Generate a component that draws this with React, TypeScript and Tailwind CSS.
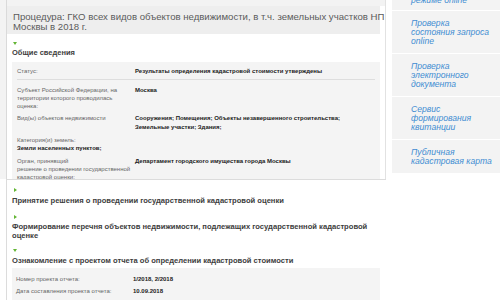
import React from 'react';

function TriDown() {
  return (
    <div className="ml-[1px] w-0 h-0 border-l-[2.5px] border-r-[2.5px] border-t-[3px] border-l-transparent border-r-transparent border-t-[#63b534]" />
  );
}

function TriRight() {
  return (
    <div className="ml-[2px] w-0 h-0 border-t-[2.5px] border-b-[2.5px] border-l-[3px] border-t-transparent border-b-transparent border-l-[#63b534]" />
  );
}

const sideLinks = [
  ['Проверка', 'состояния запроса', 'online'],
  ['Проверка', 'электронного', 'документа'],
  ['Сервис', 'формирования', 'квитанции'],
  ['Публичная', 'кадастровая карта'],
];

export default function App() {
  return (
    <div className="w-[500px] h-[300px] overflow-hidden bg-white font-['Liberation_Sans',Arial,sans-serif]">
      {/* upper part with sidebar */}
      <div className="flex h-[179px] overflow-hidden bg-[#f3f3f3]">
        <div className="w-[7px] shrink-0 border-r border-[#dadada]" />
        <main className="w-[379px] shrink-0 bg-white border-r border-[#e2e2e2]">
          <div className="h-[6px] bg-[#f3f3f3]" />
          <div className="w-[373px] bg-[#eeeeee] pl-[6px] pt-[6px] pb-[2px] text-[9.6px] leading-[10px] text-[#5b5b5b] whitespace-nowrap">
            Процедура: ГКО всех видов объектов недвижимости, в т.ч. земельных участков НП
            <br />
            Москвы в 2018 г.
          </div>
          <div className="pl-[5px] w-[373px]">
            <div className="mt-[8px]">
              <TriDown />
            </div>
            <h3 className="mt-[3px] text-[7.5px] leading-[9px] font-bold text-[#3d3d3d]">Общие сведения</h3>
            <div className="mt-[5px] bg-[#f4f4f4] px-[5px] pt-[5px] text-[6px] leading-[8px]">
              <div className="grid grid-cols-[118px_1fr] pb-[4px] border-b border-[#dedede]">
                <span className="text-[#666]">Статус:</span>
                <span className="font-bold text-[#222]">Результаты определения кадастровой стоимости утверждены</span>
              </div>
              <div className="grid grid-cols-[118px_1fr] mt-[6px]">
                <span className="text-[#666]">
                  Субъект Российской Федерации, на
                  <br />
                  территории которого проводилась
                  <br />
                  оценка:
                </span>
                <span className="font-bold text-[#222]">Москва</span>
              </div>
              <div className="grid grid-cols-[118px_1fr] mt-[4px]">
                <span className="text-[#666]">Вид(ы) объектов недвижимости</span>
                <span className="font-bold text-[#222] leading-[9px]">
                  Сооружения; Помещения; Объекты незавершенного строительства;
                  <br />
                  Земельные участки; Здания;
                </span>
              </div>
              <div className="mt-[4px]">
                <div className="text-[#666]">Категория(и) земель:</div>
                <div className="font-bold text-[#222]">Земли населенных пунктов;</div>
              </div>
              <div className="grid grid-cols-[118px_1fr] mt-[5px]">
                <span className="text-[#666]">
                  Орган, принявщий
                  <br />
                  решение о проведении государственной
                  <br />
                  кадастровой оценки:
                </span>
                <span className="font-bold text-[#222]">Департамент городского имущества города Москвы</span>
              </div>
              <div className="h-[10px]" />
            </div>
          </div>
        </main>
        <div className="w-[6px] shrink-0 bg-white" />
        <aside className="flex-1 bg-white flex flex-col gap-px overflow-hidden">
          <div className="shrink-0 h-[10px] bg-[#f3f3f3] flex items-end pl-[19px] overflow-hidden">
            <span className="text-[8.6px] leading-[9px] italic text-[#3f8dd2] mb-[5px]">режиме online</span>
          </div>
          {sideLinks.map((lines, i) => (
            <div key={i} className="shrink-0 bg-[#f3f3f3] pl-[19px] pt-[8px] pb-[7px] text-[8.6px] leading-[9px] italic text-[#3f8dd2]">
              {lines.map((l, j) => (
                <div key={j}>{l}</div>
              ))}
            </div>
          ))}
        </aside>
      </div>

      {/* lower part */}
      <div className="ml-[6px] w-[380px] h-[121px] border-l border-t border-[#dcdcdc] pl-[5px]">
        <div className="mt-[8px]">
          <TriRight />
        </div>
        <h3 className="mt-[4px] text-[7.6px] leading-[9px] font-bold text-[#3d3d3d]">
          Принятие решения о проведении государственной кадастровой оценки
        </h3>
        <div className="mt-[10px]">
          <TriRight />
        </div>
        <h3 className="mt-[3px] text-[7.6px] leading-[9px] font-bold text-[#3d3d3d]">
          Формирование перечня объектов недвижимости, подлежащих государственной кадастровой
          <br />
          оценке
        </h3>
        <div className="mt-[9px]">
          <TriDown />
        </div>
        <h3 className="mt-[4px] text-[7.6px] leading-[9px] font-bold text-[#3d3d3d]">
          Ознакомление с проектом отчета об определении кадастровой стоимости
        </h3>
        <div className="mt-[3px] w-[368px] bg-[#f4f4f4] pl-[4px] pt-[7px] pb-[10px] text-[6px] leading-[8px]">
          <div className="grid grid-cols-[117px_1fr]">
            <span className="text-[#666]">Номер проекта отчета:</span>
            <span className="font-bold text-[#222]">1/2018, 2/2018</span>
          </div>
          <div className="grid grid-cols-[117px_1fr] mt-[4px]">
            <span className="text-[#666]">Дата составления проекта отчета:</span>
            <span className="font-bold text-[#222]">10.09.2018</span>
          </div>
        </div>
      </div>
    </div>
  );
}
